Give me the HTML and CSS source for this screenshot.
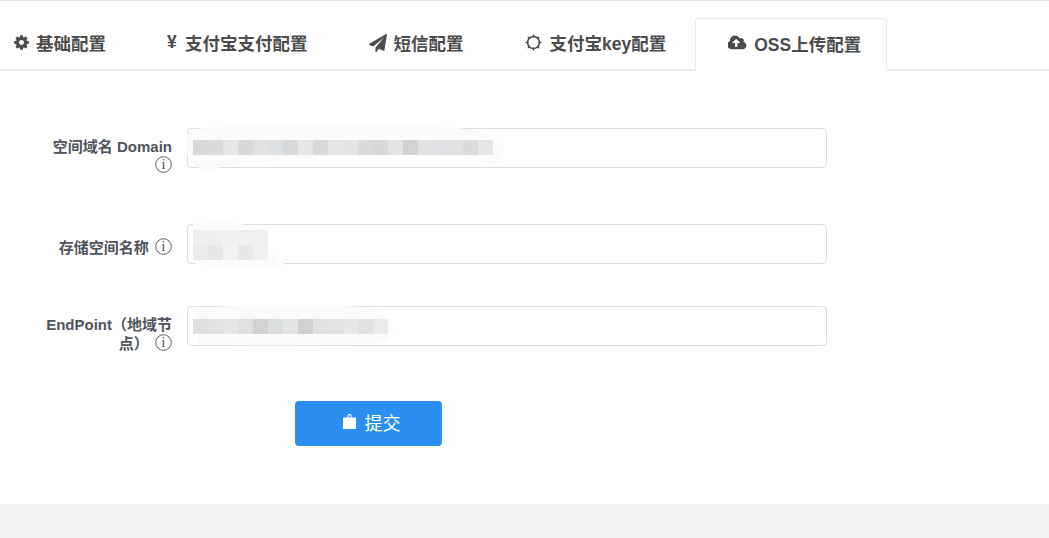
FILE: index.html
```html
<!DOCTYPE html>
<html lang="zh-CN">
<head>
<meta charset="utf-8">
<title>OSS上传配置</title>
<link rel="stylesheet" href="styles.css">
</head>
<body>
<main class="panel">
  <nav class="tabs">
    <a class="tab tab-1"><svg class="ico" viewBox="0 0 1792 1792"><path d="M1152 896q0-106-75-181t-181-75-181 75-75 181 75 181 181 75 181-75 75-181zm512-109v222q0 12-8 23t-20 13l-185 28q-19 54-39 91 35 50 107 138 10 12 10 25t-9 23q-27 37-99 108t-94 71q-12 0-26-9l-138-108q-44 23-91 38-16 136-29 186-7 28-36 28h-222q-14 0-24.5-8.5t-11.5-21.5l-28-184q-49-16-90-37l-141 107q-10 9-25 9-14 0-25-11-126-114-165-168-7-10-7-23 0-12 8-23 15-21 51-66.5t54-70.5q-27-50-41-99l-183-27q-13-2-21-12.5t-8-23.5v-222q0-12 8-23t19-13l186-28q14-46 39-92-40-57-107-138-10-12-10-24 0-10 9-23 26-36 98.5-107.5t94.5-71.5q13 0 26 10l138 107q44-23 91-38 16-136 29-186 7-28 36-28h222q14 0 24.5 8.5t11.5 21.5l28 184q49 16 90 37l142-107q9-9 24-9 13 0 25 10 129 119 165 170 7 8 7 22 0 12-8 23-15 21-51 66.5t-54 70.5q26 50 41 98l183 28q13 2 21 12.5t8 23.5z"/></svg><span>基础配置</span></a>
    <a class="tab tab-2"><span class="yen">¥</span><span>支付宝支付配置</span></a>
    <a class="tab tab-3"><svg class="ico ico-plane" viewBox="0 0 1792 1792"><path d="M1764 11q33 24 27 64l-256 1536q-5 29-32 45-14 8-31 8-11 0-24-5l-453-185-242 295q-18 23-49 23-13 0-22-4-19-7-30.5-23.5t-11.5-36.5v-349l864-1059-1069 925-395-162q-37-14-40-55-2-40 32-59l1664-960q15-9 32-9 20 0 36 11z"/></svg><span>短信配置</span></a>
    <a class="tab tab-4"><svg class="ico ico-sun" viewBox="0 0 16 16"><circle cx="8" cy="8" r="5.600" fill="none" stroke="#4c4c4c" stroke-width="1.500"/><path d="M8 0l1.500 3h-3zM8 16l-1.500-3h3zM0 8l3-1.500v3zM16 8l-3 1.500v-3zM2.300 2.300l3.200 1.100-2.100 2.100zM13.700 13.700l-3.200-1.100 2.100-2.100zM13.700 2.300l-1.100 3.200-2.100-2.100zM2.300 13.700l1.100-3.200 2.100 2.100z"/></svg><span>支付宝key配置</span></a>
    <a class="tab tab-5 is-active"><svg class="ico ico-cloud" viewBox="0 0 1920 1792"><path d="M1216 864q0-14-9-23l-352-352q-9-9-23-9t-23 9l-351 351q-10 12-10 24 0 14 9 23t23 9h224v352q0 13 9.5 22.5t22.5 9.5h192q13 0 22.5-9.5t9.5-22.5v-352h224q13 0 22.5-9.5t9.5-22.5zm640 288q0 159-112.5 271.5t-271.5 112.5h-1088q-185 0-316.5-131.5t-131.5-316.5q0-130 70-240t188-165q-2-30-2-43 0-212 150-362t362-150q156 0 285.5 87t188.5 231q71-62 166-62 106 0 181 75t75 181q0 76-41 138 130 31 213.5 135.5t83.5 238.5z"/></svg><span>OSS上传配置</span></a>
  </nav>

  <form class="form">
    <div class="row row-tall">
      <label class="label">空间域名 Domain <svg class="info" viewBox="0 0 17 17"><circle cx="8.500" cy="8.500" r="7.800"/><text x="8.500" y="13" text-anchor="middle">i</text></svg></label>
      <div class="field">
        <input class="input" type="text">
        <svg class="mask mask-1" viewBox="0 0 340 50"><path d="M8 6 C60 -2 250 -2 300 6 C330 12 345 28 325 42 C270 30 200 30 120 36 C80 42 50 38 30 48 C5 50 -6 18 8 6z"/></svg>
        <div class="pixels pixels-1">
          <i style="background:#d9d9d9"></i><i style="background:#d9dbdc"></i><i style="background:#e5e6e6"></i><i style="background:#d7d8d9"></i><i style="background:#e0e1e1"></i><i style="background:#dde0e3"></i><i style="background:#d9d9d9"></i><i style="background:#e5e6e7"></i><i style="background:#d8d9da"></i><i style="background:#e4e5e6"></i><i style="background:#e3e4e5"></i><i style="background:#d9dadb"></i><i style="background:#d7d8da"></i><i style="background:#e3e5e4"></i><i style="background:#d1d2d4"></i><i style="background:#e1e2e2"></i><i style="background:#e0e1e4"></i><i style="background:#e0e1e1"></i><i style="background:#dadbdd"></i><i style="background:#e5e6e6"></i>
        </div>
      </div>
    </div>

    <div class="row">
      <label class="label label-single">存储空间名称 <svg class="info" viewBox="0 0 17 17"><circle cx="8.500" cy="8.500" r="7.800"/><text x="8.500" y="13" text-anchor="middle">i</text></svg></label>
      <div class="field">
        <input class="input" type="text">
        <svg class="mask mask-2" viewBox="0 0 110 50"><path d="M4 2 C30 -2 60 0 75 8 C85 25 90 38 104 46 C70 52 30 48 6 46z"/></svg>
        <div class="pixels pixels-2">
          <i style="background:#eeeeee"></i><i style="background:#eeeeee"></i><i style="background:#eff0f0"></i><i style="background:#eeefef"></i><i style="background:#eff0f1"></i>
          <i style="background:#e9eaea"></i><i style="background:#e6e7e7"></i><i style="background:#f1f1f1"></i><i style="background:#e6e7e7"></i><i style="background:#eff0f1"></i>
        </div>
      </div>
    </div>

    <div class="row row-tall">
      <label class="label">EndPoint（地域节点） <svg class="info" viewBox="0 0 17 17"><circle cx="8.500" cy="8.500" r="7.800"/><text x="8.500" y="13" text-anchor="middle">i</text></svg></label>
      <div class="field">
        <input class="input" type="text">
        <svg class="mask mask-3" viewBox="0 0 225 46"><path d="M6 2 C70 -2 190 -2 205 4 C225 18 225 34 205 40 C150 44 60 44 6 42z"/></svg>
        <div class="pixels pixels-3">
          <i style="background:#dfdfdf"></i><i style="background:#e1e2e2"></i><i style="background:#e4e5e5"></i><i style="background:#dfe0e0"></i><i style="background:#d1d2d2"></i><i style="background:#dadddd"></i><i style="background:#e3e5e5"></i><i style="background:#d0d1d2"></i><i style="background:#e0e2e3"></i><i style="background:#e2e3e4"></i><i style="background:#e6e7e8"></i><i style="background:#e0e1e2"></i><i style="background:#e9eaec"></i>
        </div>
      </div>
    </div>

    <div class="actions">
      <button class="submit" type="button"><svg class="bag" viewBox="0 0 13 15"><path d="M0 3.500h4.500V1.500C4.500.6 5.300 0 6.500 0s2 .6 2 1.500v2H13V15H0zM5.500 3.500h2V1.500C7.500 1.200 7 1 6.500 1s-1 .2-1 .5z" fill-rule="evenodd"/></svg><span>提交</span></button>
    </div>
  </form>
</main>
<footer class="foot"></footer>
</body>
</html>
```

FILE: styles.css
```css
html, body {
  margin: 0;
  padding: 0;
  height: 100%;
  overflow: hidden;
}
body {
  display: flex;
  flex-direction: column;
  background: #fff;
  color: #555;
  font-family: "Liberation Sans", "Noto Sans CJK SC", sans-serif;
}
.panel {
  height: 504px;
  border-top: 1px solid #e7eaec;
  box-sizing: border-box;
}
.tabs {
  display: flex;
  align-items: flex-end;
  height: 70px;
  box-sizing: border-box;
  border-bottom: 2px solid #e7eaec;
  padding-left: 13px;
}
.tab {
  display: flex;
  align-items: center;
  height: 52px;
  box-sizing: border-box;
  padding-bottom: 1px;
  font-size: 17.500px;
  font-weight: 700;
  color: #4c4c4c;
  white-space: nowrap;
}
.tab-2 { margin-left: 61px; }
.tab-3 { margin-left: 61px; }
.tab-4 { margin-left: 61px; }
.tab-5 { margin-left: 29px; }
.is-active {
  width: 192px;
  height: 53px;
  margin-bottom: -2px;
  padding: 0 0 4px 32px;
  background: #fff;
  border: 1px solid #e7eaec;
  border-bottom: 0;
  border-radius: 4px 4px 0 0;
}
.ico {
  width: 17px;
  height: 17px;
  margin-right: 6px;
  fill: #4c4c4c;
  flex: none;
}
.ico-plane { width: 18px; height: 18px; margin-right: 7px; }
.ico-sun { width: 17px; height: 17px; margin-right: 8px; }
.ico-cloud { width: 19px; height: 18px; margin-right: 7px; }
.yen {
  width: 18px;
  font-size: 17.500px;
  line-height: 1;
}
.form {
  padding-top: 57px;
}
.row {
  display: flex;
  margin-bottom: 42px;
}
.row-tall { min-height: 54px; }
.label {
  width: 127px;
  margin-left: 45px;
  padding-top: 10px;
  box-sizing: border-box;
  flex: none;
  text-align: right;
  font-size: 15px;
  line-height: 18px;
  font-weight: 700;
  color: #50545c;
}
.label-single { padding-top: 14px; }
.info {
  display: inline-block;
  width: 17px;
  height: 17px;
  margin-left: 2px;
  vertical-align: -2px;
}
.info circle {
  fill: #fff;
  stroke: #4f5f50;
  stroke-width: 1;
}
.info text {
  font-family: "Liberation Serif", serif;
  font-size: 14px;
  font-weight: 400;
  fill: #3f4f40;
}
.field {
  position: relative;
  width: 640px;
  height: 40px;
  margin-left: 15px;
  flex: none;
}
.input {
  display: block;
  width: 100%;
  height: 40px;
  box-sizing: border-box;
  border: 1px solid #dcdfe2;
  border-radius: 4px;
  background: #fff;
  padding: 0 6px;
  outline: 0;
}
.mask {
  position: absolute;
  fill: #fbfbfb;
}
.mask-1 { left: -8px; top: -4px; width: 335px; height: 48px; }
.mask-2 { left: 2px; top: -2px; width: 102px; height: 46px; }
.mask-3 { left: 2px; top: 0; width: 212px; height: 42px; }
.pixels {
  position: absolute;
  left: 6px;
  display: grid;
  grid-auto-rows: 15px;
  grid-template-columns: repeat(auto-fill, 15px);
}
.pixels i { display: block; }
.pixels-1 { top: 12px; width: 300px; }
.pixels-2 { top: 6px; width: 75px; }
.pixels-3 { top: 13px; width: 195px; }
.actions {
  margin-top: -1px;
  padding-left: 295px;
}
.submit {
  display: flex;
  align-items: center;
  justify-content: center;
  width: 147px;
  height: 45px;
  padding: 0 0 4px 6px;
  border: 0;
  border-radius: 4px;
  background: #2d8ef2;
  color: #fff;
  font-family: "Noto Sans CJK SC", sans-serif;
  font-size: 18px;
  font-weight: 400;
}
.bag {
  width: 13px;
  height: 15px;
  margin-right: 9px;
  fill: #fff;
}
.foot {
  flex: 1;
  background: #f2f2f2;
}
```
